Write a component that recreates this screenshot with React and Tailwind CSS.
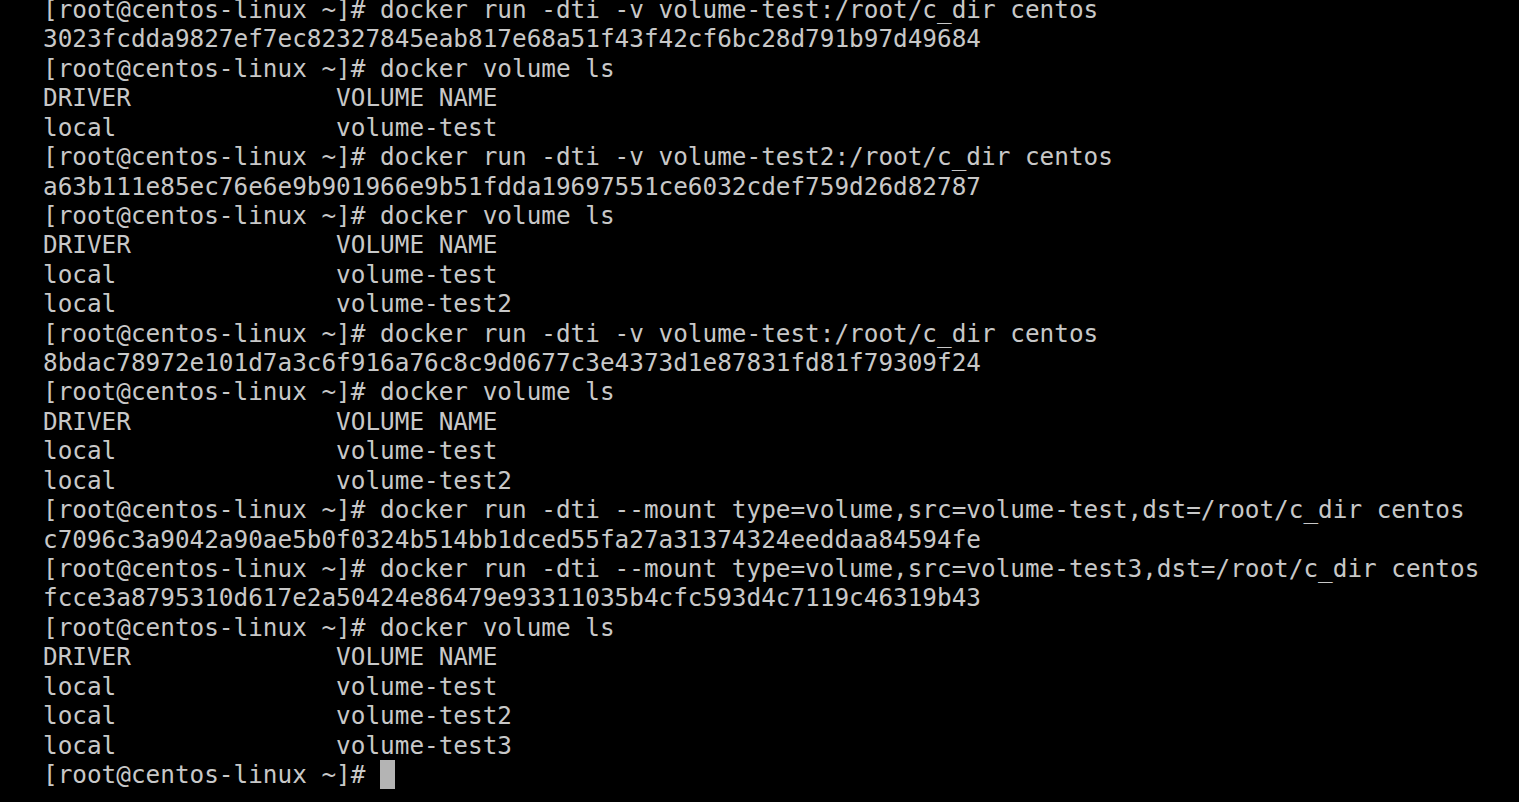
import React from "react";

const lines = [
  "[root@centos-linux ~]# docker run -dti -v volume-test:/root/c_dir centos",
  "3023fcdda9827ef7ec82327845eab817e68a51f43f42cf6bc28d791b97d49684",
  "[root@centos-linux ~]# docker volume ls",
  "DRIVER              VOLUME NAME",
  "local               volume-test",
  "[root@centos-linux ~]# docker run -dti -v volume-test2:/root/c_dir centos",
  "a63b111e85ec76e6e9b901966e9b51fdda19697551ce6032cdef759d26d82787",
  "[root@centos-linux ~]# docker volume ls",
  "DRIVER              VOLUME NAME",
  "local               volume-test",
  "local               volume-test2",
  "[root@centos-linux ~]# docker run -dti -v volume-test:/root/c_dir centos",
  "8bdac78972e101d7a3c6f916a76c8c9d0677c3e4373d1e87831fd81f79309f24",
  "[root@centos-linux ~]# docker volume ls",
  "DRIVER              VOLUME NAME",
  "local               volume-test",
  "local               volume-test2",
  "[root@centos-linux ~]# docker run -dti --mount type=volume,src=volume-test,dst=/root/c_dir centos",
  "c7096c3a9042a90ae5b0f0324b514bb1dced55fa27a31374324eeddaa84594fe",
  "[root@centos-linux ~]# docker run -dti --mount type=volume,src=volume-test3,dst=/root/c_dir centos",
  "fcce3a8795310d617e2a50424e86479e93311035b4cfc593d4c7119c46319b43",
  "[root@centos-linux ~]# docker volume ls",
  "DRIVER              VOLUME NAME",
  "local               volume-test",
  "local               volume-test2",
  "local               volume-test3",
];

export default function App() {
  return (
    <div className="w-[1519px] h-[802px] overflow-hidden bg-black">
      <div
        className="mt-[-5px] pl-[43px] text-[24.35px] leading-[29.42px] text-[#c8c8c8] whitespace-pre"
        style={{ fontFamily: '"DejaVu Sans Mono", "Liberation Mono", monospace' }}
      >
        {lines.map((l, i) => (
          <div key={i}>{l}</div>
        ))}
        <div className="flex items-center">
          <span>{"[root@centos-linux ~]# "}</span>
          <span className="inline-block w-[15px] h-[29px] bg-[#b4b4b4]" />
        </div>
      </div>
    </div>
  );
}
